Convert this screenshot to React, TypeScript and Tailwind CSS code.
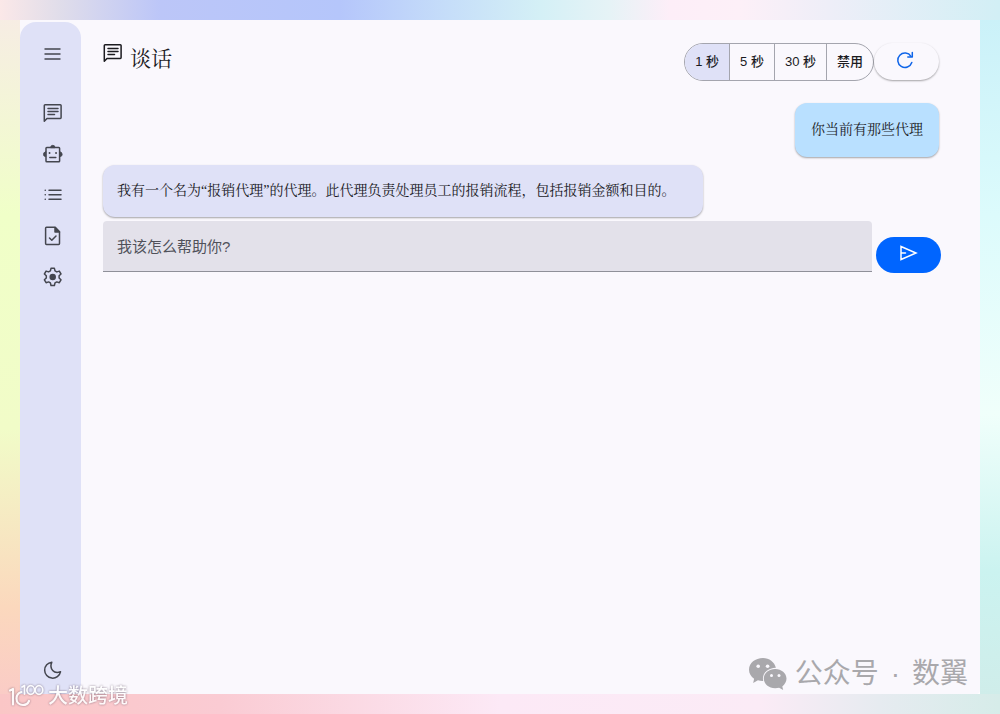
import { useState } from "react";
import type { ReactNode } from "react";

type IconProps = { className?: string; children?: ReactNode };

const INTERVALS = ["1 秒", "5 秒", "30 秒", "禁用"];

const serif = "font-['Liberation_Serif','Noto_Serif_CJK_SC','Noto_Sans_CJK_SC',serif]";

function Icon({ className = "size-5", children }: IconProps) {
  return (
    <svg
      viewBox="0 0 20 20"
      className={className}
      fill="none"
      stroke="currentColor"
      strokeWidth="1.5"
      strokeLinejoin="round"
      strokeLinecap="round"
      aria-hidden="true"
    >
      {children}
    </svg>
  );
}

function ChatIcon({ className }: IconProps) {
  return (
    <Icon className={className}>
      <path d="M1.300 18.200V2.600q0-.8.8-.8h15.200q.8 0 .8.8v12q0 .8-.8.8H4L1.300 18.200z" />
      <path d="M5 5.600h10M5 8.600h10M5 11.600h6.500" />
    </Icon>
  );
}

function BotIcon() {
  return (
    <Icon>
      <rect x="3" y="3.500" width="13.600" height="14.300" rx="0.800" />
      <path
        d="M7.600 3.300a2.200 2 0 0 1 4.400 0zM2.700 8v4.600a2.300 2.300 0 0 1 0-4.600zM16.900 8v4.600a2.300 2.300 0 0 0 0-4.600z"
        fill="currentColor"
        strokeWidth="0.8"
      />
      <path d="M6.500 9h.1M13 9h.1" strokeWidth="1.800" />
      <path d="M6.800 13.500h6" />
    </Icon>
  );
}

function ListIcon() {
  return (
    <Icon>
      <path d="M6 5.300h12M6 9.800h12M6 14.300h12" />
      <path d="M2.200 5.300h.1M2.200 9.800h.1M2.200 14.300h.1" />
    </Icon>
  );
}

function FileIcon() {
  return (
    <Icon>
      <path d="M3.500 1.300h8.700L16.500 5.800v11.700q0 .9-.9.900H3.500q-.9 0-.9-.9V2.200q0-.9.9-.9z" />
      <path d="M12 1.500V6h4.500z" fill="currentColor" />
      <path d="M6.500 12l2.300 2.300 4.200-4.300" />
    </Icon>
  );
}

function GearIcon() {
  return (
    <Icon>
      <path d="M8 1.300h3.400l.6 2.600 1.800 1 2.500-.8 1.700 2.900-1.900 1.800v2.200l1.900 1.800-1.700 2.900-2.500-.8-1.800 1-.6 2.600H8l-.6-2.600-1.800-1-2.500.8-1.700-2.900 1.900-1.800V8.800L1.400 7l1.700-2.900 2.500.8 1.800-1z" />
      <circle cx="9.700" cy="9.900" r="2.500" fill="currentColor" />
    </Icon>
  );
}

function WechatLogo() {
  return (
    <svg viewBox="0 0 38 32" className="h-8 w-[38px]" aria-hidden="true">
      <path
        fill="currentColor"
        d="M14 0C6.200 0 0 5.100 0 11.700c0 3.700 2 6.900 5.100 9L4.200 25l4.700-2.700c1.700.5 3.400.8 5.300.7C12.600 15.600 18.300 10 26.900 9.700 25.600 4 20.200 0 14 0z"
      />
      <path
        fill="currentColor"
        d="M26.200 11c-6.500 0-11.400 4.300-11.400 9.600 0 5.400 5 9.700 11.400 9.700 1.400 0 2.700-.2 3.900-.5l4.100 2.200-.9-3.600c2.600-1.900 4.200-4.700 4.200-7.800 0-5.300-5-9.600-11.300-9.600z"
      />
      <g fill="#faf8fd">
        <circle cx="9.200" cy="8.200" r="1.800" />
        <circle cx="18.600" cy="8.200" r="1.800" />
        <circle cx="22.500" cy="17.500" r="1.500" />
        <circle cx="30" cy="17.500" r="1.500" />
      </g>
    </svg>
  );
}

function SiteLogo() {
  return (
    <svg
      viewBox="0 0 36 24"
      className="h-6 w-9"
      fill="none"
      stroke="currentColor"
      strokeLinecap="round"
      strokeLinejoin="round"
      aria-hidden="true"
    >
      <path d="M2 6.500L5 5v15.500" strokeWidth="2.200" />
      <path d="M13.500 8C10 9 8.500 11.500 8.500 14.500c0 4 3 6.500 6.500 6.500 3 0 5-1.500 6-4" strokeWidth="2.200" />
      <path d="M14 3l2.500-1.500V10" strokeWidth="1.800" />
      <ellipse cx="22.700" cy="6" rx="3.800" ry="4.300" strokeWidth="1.700" />
      <ellipse cx="31" cy="6" rx="3.800" ry="4.300" strokeWidth="1.700" />
    </svg>
  );
}

const NAV = [
  { label: "谈话", icon: <ChatIcon /> },
  { label: "代理", icon: <BotIcon /> },
  { label: "列表", icon: <ListIcon /> },
  { label: "任务", icon: <FileIcon /> },
  { label: "设置", icon: <GearIcon /> },
];

function Sidebar() {
  return (
    <aside className="flex w-[61px] shrink-0 flex-col items-center rounded-t-2xl bg-[#dfe1f7] pt-[22px] pb-[14px] pl-1 text-[#44464f]">
      <button aria-label="菜单" className="flex size-5 items-center justify-center">
        <Icon>
          <path d="M1.500 5h16M1.500 10h16M1.500 15h16" strokeLinecap="butt" />
        </Icon>
      </button>
      <nav className="mt-[39px] flex flex-col gap-[21px]">
        {NAV.map((item) => (
          <a key={item.label} href="#" aria-label={item.label} className="block size-5">
            {item.icon}
          </a>
        ))}
      </nav>
      <button aria-label="深色模式" className="mt-auto size-5">
        <Icon>
          <path d="M8.800 2.200a8 8 0 1 0 8.700 9.600c-3.200 1.200-6 .7-7.800-1.300C7.800 8.300 7.500 5.300 8.800 2.200z" />
        </Icon>
      </button>
    </aside>
  );
}

export default function App() {
  const [interval, setInterval] = useState("1 秒");
  const [message, setMessage] = useState("");

  return (
    <div className="relative flex min-h-screen bg-[linear-gradient(90deg,#fbe8e8_0%,#e0ddea_6%,#bcc6f8_16%,#b5c6fb_34%,#c6def9_45%,#d4f0f6_54%,#e6f3f6_61%,#fdeef8_67%,#fdf0f8_74%,#eeeef8_83%,#d2eff5_100%),linear-gradient(90deg,#fac6c6_0%,#facbd3_22%,#fce9f6_50%,#fbebf6_76%,#e6ebf0_88%,#d6ece9_100%),linear-gradient(180deg,#f7ebe6_0%,#f0ffc8_30%,#f1fcc8_60%,#fbd8bd_85%,#fac9c8_100%),linear-gradient(180deg,#c9f0f8_0%,#dcfbfc_30%,#f0fffb_58%,#cbf3f0_80%,#d0ece9_100%)] bg-[length:100%_20px,100%_20px,20px_100%,20px_100%] bg-[position:top,bottom,left,right] bg-no-repeat p-5 font-['Liberation_Sans','Noto_Sans_CJK_SC',sans-serif] text-[#1b1b1f]">
      <div className="flex grow rounded-b bg-[#faf8fd] pt-[2px]">
        <Sidebar />

        <main className="min-w-0 grow pt-[21px] pr-[41px] pl-[22px]">
          <header className="flex items-start justify-between">
            <h1 className={`flex items-start gap-[7px] text-[21px] leading-8 ${serif}`}>
              <ChatIcon className="size-5" />
              谈话
            </h1>
            <div className="flex">
              <div className="flex h-[38px] overflow-hidden rounded-full border border-[#a4a5ae]">
                {INTERVALS.map((label) => (
                  <button
                    key={label}
                    onClick={() => setInterval(label)}
                    className={`border-r border-[#a4a5ae] px-[10px] text-[13px] font-medium last:border-r-0 ${interval === label ? "bg-[#dfe1f7]" : ""}`}
                  >
                    {label}
                  </button>
                ))}
              </div>
              <button
                aria-label="刷新"
                className="flex h-[37px] w-[65px] items-center justify-center rounded-full pr-1 pb-1 text-[#0f65e8] shadow-[0_1px_2px_rgba(0,0,0,0.35)]"
              >
                <Icon>
                  <path d="M16.800 12.500A7.200 7.200 0 1 1 16 6.300" />
                  <path d="M17.300 2.500V7H12.800" />
                </Icon>
              </button>
            </div>
          </header>

          <section className={`mt-[22px] flex flex-col gap-2 text-[14px] leading-[22px] ${serif}`}>
            <p className="self-end rounded-xl bg-[#b9e0ff] px-4 py-4 shadow-[0_1px_2px_rgba(0,0,0,0.35)]">
              你当前有那些代理
            </p>
            <p className="self-start rounded-xl bg-[#dfe1f7] py-[15px] pr-7 pl-[14px] shadow-[0_1px_2px_rgba(0,0,0,0.35)]">
              我有一个名为“报销代理”的代理。此代理负责处理员工的报销流程，包括报销金额和目的。
            </p>
          </section>

          <form className="mt-1 -mr-[2px] flex items-start gap-1" onSubmit={(e) => e.preventDefault()}>
            <input
              aria-label="消息"
              value={message}
              onChange={(e) => setMessage(e.target.value)}
              placeholder="我该怎么帮助你?"
              className="h-[51px] min-w-0 grow rounded-t border-b border-[#8f9099] bg-[#e3e1ea] px-[14px] text-[15px] outline-none placeholder:text-[#50515a]"
            />
            <button
              aria-label="发送"
              className="mt-4 flex h-9 w-[65px] items-center justify-center rounded-full bg-[#0065ff] pb-1 text-white"
            >
              <Icon>
                <path d="M2 3.500L17 10 2 16.500zM2 10h4.500" strokeLinejoin="miter" />
              </Icon>
            </button>
          </form>
        </main>
      </div>

      <div className="absolute right-8 bottom-5 flex items-center gap-2 text-[28px] leading-10 text-[#a9a8ac]">
        <WechatLogo />
        <p className="flex gap-3">
          <span>公众号</span>
          <span>·</span>
          <span>数翼</span>
        </p>
      </div>
      <div className="absolute bottom-1 left-2 flex items-center gap-1 text-[20px] leading-7 font-medium text-white opacity-90 drop-shadow-[0_0_1px_rgba(90,70,90,0.7)]">
        <SiteLogo />
        <span>大数跨境</span>
      </div>
    </div>
  );
}
